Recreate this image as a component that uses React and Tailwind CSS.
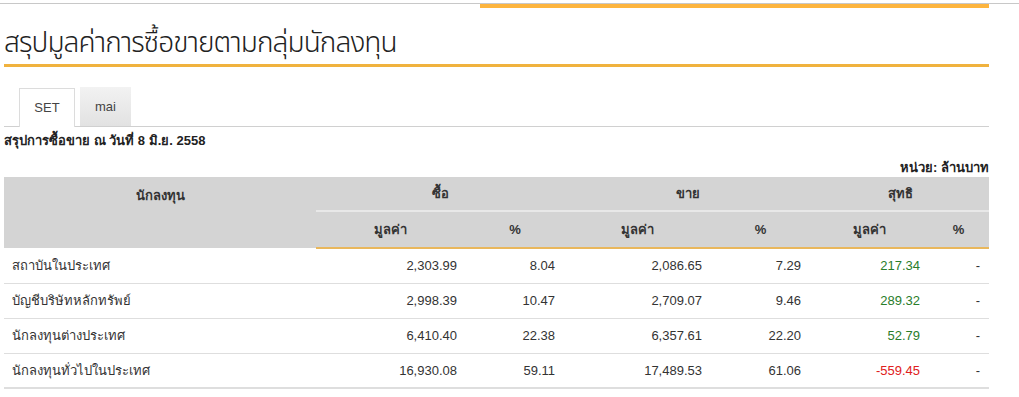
import React from "react";

const rows = [
  ["สถาบันในประเทศ", "2,303.99", "8.04", "2,086.65", "7.29", "217.34", "-"],
  ["บัญชีบริษัทหลักทรัพย์", "2,998.39", "10.47", "2,709.07", "9.46", "289.32", "-"],
  ["นักลงทุนต่างประเทศ", "6,410.40", "22.38", "6,357.61", "22.20", "52.79", "-"],
  ["นักลงทุนทั่วไปในประเทศ", "16,930.08", "59.11", "17,489.53", "61.06", "-559.45", "-"],
];

const App = () => {
  return (
    <div className="w-[1019px] h-[397px] bg-white overflow-hidden text-[#333] font-['Liberation_Sans','Noto_Sans',sans-serif]">
      {/* top strip */}
      <div className="mt-[3px] border-t border-[#c8c8c8]">
        <div className="ml-[480px] w-[509px] h-[4px] bg-[#fdb53f]" />
      </div>

      <div className="pl-[4px] w-[989px]">
        <h1 className="mt-[20px] text-[28px] leading-[32px] font-light tracking-[-0.9px] text-[#222] pb-[4px] border-b-[3px] border-[#f0b23e] font-['Noto_Sans_Thai','Noto_Sans_Thai_UI','Liberation_Sans',sans-serif]">
          สรุปมูลค่าการซื้อขายตามกลุ่มนักลงทุน
        </h1>

        {/* tabs */}
        <div className="mt-[20px] flex items-end gap-[5px] pl-[15px] border-b border-[#d0d0d0] h-[40px]">
          <div className="w-[56px] h-[39px] bg-white border border-b-0 border-[#dcdcdc] -mb-px flex items-center justify-center text-[13px] text-[#444]">
            SET
          </div>
          <div className="w-[51px] h-[39px] bg-gradient-to-b from-[#f2f2f2] to-[#e2e2e2] flex items-center justify-center text-[13px] text-[#444]">
            mai
          </div>
        </div>

        <div className="mt-[5px] text-[13px] font-bold text-[#222] leading-[18px]">
          สรุปการซื้อขาย ณ วันที่ 8 มิ.ย. 2558
        </div>
        <div className="mt-[9px] text-right text-[13px] font-bold text-[#222] leading-[18px]">
          หน่วย: ล้านบาท
        </div>

        <table className="w-[985px] border-collapse text-[13px] table-fixed">
          <colgroup>
            <col className="w-[312px]" />
            <col className="w-[149px]" />
            <col className="w-[100px]" />
            <col className="w-[145px]" />
            <col className="w-[101px]" />
            <col className="w-[117px]" />
            <col className="w-[61px]" />
          </colgroup>
          <thead className="bg-[#d4d4d4] text-[#333] font-bold">
            <tr className="h-[34px]">
              <th rowSpan={2} className="align-top pt-[9px] font-bold">นักลงทุน</th>
              <th colSpan={2} className="font-bold border-b-2 border-[#e8e8e8]">ซื้อ</th>
              <th colSpan={2} className="font-bold border-b-2 border-[#e8e8e8]">ขาย</th>
              <th colSpan={2} className="font-bold border-b-2 border-[#e8e8e8]">สุทธิ</th>
            </tr>
            <tr className="h-[37px]">
              {["มูลค่า", "%", "มูลค่า", "%", "มูลค่า", "%"].map((t, i) => (
                <th key={i} className="font-bold border-b-2 border-[#e9b75c]">
                  {t}
                </th>
              ))}
            </tr>
          </thead>
          <tbody>
            {rows.map((r, i) => (
              <tr
                key={i}
                className={`h-[35px] ${i === rows.length - 1 ? "border-b-2" : "border-b"} border-[#dedede]`}
              >
                <td className="pl-[8px] text-[#333]">{r[0]}</td>
                <td className="text-right pr-[8px]">{r[1]}</td>
                <td className="text-right pr-[10px]">{r[2]}</td>
                <td className="text-right pr-[8px]">{r[3]}</td>
                <td className="text-right pr-[10px]">{r[4]}</td>
                <td className={`text-right pr-[8px] ${r[5].startsWith("-") ? "text-[#e02020]" : "text-[#2a7d2a]"}`}>
                  {r[5]}
                </td>
                <td className="text-right pr-[9px]">{r[6]}</td>
              </tr>
            ))}
          </tbody>
        </table>
      </div>
    </div>
  );
};

export default App;
